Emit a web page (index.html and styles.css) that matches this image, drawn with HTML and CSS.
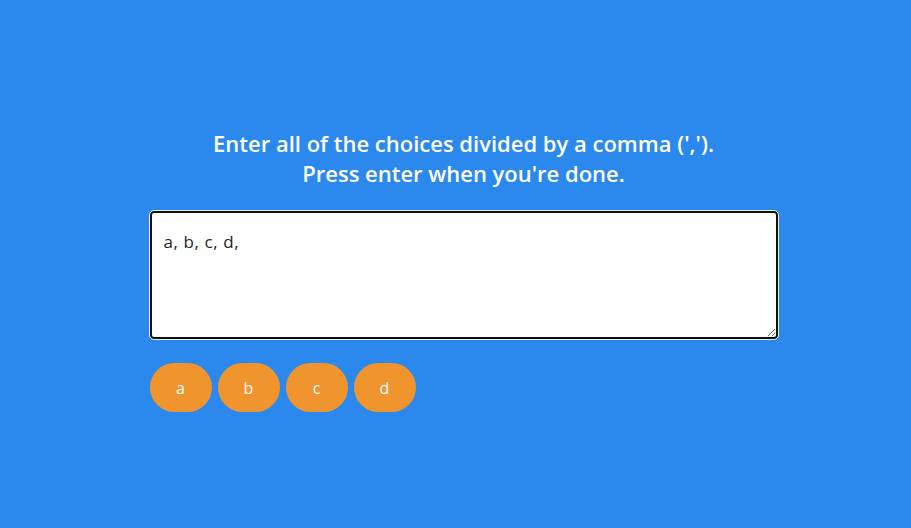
FILE: index.html
```html
<!DOCTYPE html>
<html>
<head>
<meta charset="utf-8">
<link rel="stylesheet" href="styles.css">
</head>
<body>
<main class="page">
  <div class="panel">
    <h1 class="prompt">Enter all of the choices divided by a comma (',').<br>Press enter when you're done.</h1>
    <textarea class="choices-input">a, b, c, d,</textarea>
    <div class="chips">
      <span class="chip">a</span>
      <span class="chip">b</span>
      <span class="chip">c</span>
      <span class="chip">d</span>
    </div>
  </div>
</main>
</body>
</html>
```

FILE: styles.css
```css
html, body {
  margin: 0;
  padding: 0;
  height: 100%;
  background: #2b89ee;
  font-family: "Open Sans", "Noto Sans", sans-serif;
}
.page {
  margin-left: 16px;
  padding-top: 128px;
  display: flex;
  justify-content: center;
}
.panel {
  width: 628px;
  display: flex;
  flex-direction: column;
}
.prompt {
  margin: 0 0 23px;
  color: #ffffff;
  font-size: 22px;
  font-weight: 600;
  line-height: 30px;
  text-align: center;
  letter-spacing: 0;
}
.choices-input {
  box-sizing: border-box;
  width: 628px;
  height: 128px;
  border: 2px solid #111;
  border-radius: 4px;
  outline: 1px solid #e8eef8;
  background: #fff;
  padding: 17px 12px;
  font-family: "Open Sans", "Noto Sans", sans-serif;
  font-size: 17px;
  letter-spacing: 0.6px;
  color: #222;
  resize: both;
}
.chips {
  display: flex;
  gap: 6px;
  margin-top: 24px;
}
.chip {
  width: 62px;
  height: 49px;
  border-radius: 25px;
  background: #f0952e;
  color: #fff;
  font-size: 16px;
  display: flex;
  align-items: center;
  justify-content: center;
}
```
